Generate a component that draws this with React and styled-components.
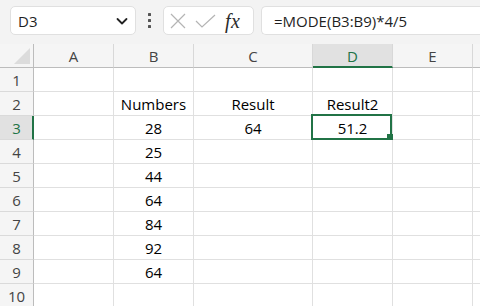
import React from "react";
import styled, { createGlobalStyle } from "styled-components";

const Global = createGlobalStyle`
  html, body { margin: 0; padding: 0; background: #ffffff; overflow: hidden; }
  body { font-family: "Open Sans", "Noto Sans", Arial, sans-serif; }
`;

const Page = styled.div`
  width: 480px;
  height: 306px;
  overflow: hidden;
  background: #ffffff;
  display: flex;
  flex-direction: column;
`;

const Toolbar = styled.div`
  height: 44px;
  flex: none;
  background: #f3f3f3;
  display: flex;
  align-items: flex-start;
  padding: 6px 0 0 10px;
  box-sizing: border-box;
`;

const NameBox = styled.div`
  width: 126px;
  height: 29px;
  box-sizing: border-box;
  background: #ffffff;
  border: 1px solid #e0e0e0;
  border-radius: 5px;
  display: flex;
  align-items: center;
  justify-content: space-between;
  padding: 0 6px 0 7px;
  font-size: 15px;
  color: #1f1f1f;
`;

const Dots = styled.div`
  width: 27px;
  height: 29px;
  display: flex;
  flex-direction: column;
  align-items: center;
  justify-content: center;
  gap: 3px;
  span {
    width: 3px;
    height: 3px;
    background: #555;
    border-radius: 0.5px;
  }
`;

const FxBox = styled.div`
  width: 91px;
  height: 29px;
  box-sizing: border-box;
  background: #ffffff;
  border: 1px solid #e0e0e0;
  border-radius: 5px;
  display: flex;
  align-items: center;
  padding: 0 0 0 6px;
  gap: 9px;
`;

const Fx = styled.span`
  font-family: "Liberation Serif", "DejaVu Serif", serif;
  font-style: italic;
  font-size: 20px;
  color: #2b2b2b;
  letter-spacing: 0.5px;
  line-height: 1;
`;

const FormulaBox = styled.div`
  flex: 1;
  margin-left: 7px;
  height: 29px;
  box-sizing: border-box;
  background: #ffffff;
  border: 1px solid #e0e0e0;
  border-right: none;
  border-radius: 5px 0 0 5px;
  display: flex;
  align-items: center;
  padding-left: 12px;
  font-size: 15px;
  color: #1f1f1f;
  white-space: nowrap;
`;

const Grid = styled.div`
  display: grid;
  grid-template-columns: 34px 80px 80px 119px 80px 80px 80px;
  grid-auto-rows: 24px;
  font-size: 15px;
`;

const ColHead = styled.div`
  background: ${(p) => (p.$sel ? "#e1e1e1" : "#f5f5f5")};
  color: ${(p) => (p.$sel ? "#217346" : "#444")};
  border-right: 1px solid #d8d8d8;
  border-bottom: ${(p) => (p.$sel ? "2px solid #217346" : "1px solid #bcbcbc")};
  box-sizing: border-box;
  display: flex;
  align-items: center;
  justify-content: center;
  padding-top: ${(p) => (p.$sel ? "1px" : "0")};
`;

const Corner = styled.div`
  background: #f5f5f5;
  border-right: 1px solid #bcbcbc;
  border-bottom: 1px solid #bcbcbc;
  box-sizing: border-box;
  display: flex;
  align-items: flex-end;
  justify-content: flex-end;
  padding: 0 3px 3px 0;
`;

const RowHead = styled.div`
  background: ${(p) => (p.$sel ? "#e1e1e1" : "#f5f5f5")};
  color: ${(p) => (p.$sel ? "#217346" : "#444")};
  border-right: ${(p) => (p.$sel ? "2px solid #217346" : "1px solid #bcbcbc")};
  border-bottom: 1px solid #dadada;
  box-sizing: border-box;
  display: flex;
  align-items: center;
  justify-content: center;
  padding-left: ${(p) => (p.$sel ? "1px" : "0")};
`;

const Cell = styled.div`
  position: relative;
  border-right: 1px solid #e0e0e0;
  border-bottom: 1px solid #e0e0e0;
  box-sizing: border-box;
  display: flex;
  align-items: center;
  justify-content: center;
  padding-top: 1px;
  color: #000;
  white-space: nowrap;
`;

const Selection = styled.div`
  position: absolute;
  top: -2px;
  left: -2px;
  right: 0;
  bottom: -1px;
  border: 2px solid #217346;
  pointer-events: none;
`;

const Handle = styled.div`
  position: absolute;
  right: -4px;
  bottom: -3px;
  width: 6px;
  height: 6px;
  background: #217346;
  border: 1px solid #ffffff;
  border-left: none;
  border-top: none;
  box-sizing: content-box;
`;

const cols = ["A", "B", "C", "D", "E", "F"];
const visibleLabel = { A: "A", B: "B", C: "C", D: "D", E: "E", F: "" };
const data = {
  2: { B: "Numbers", C: "Result", D: "Result2" },
  3: { B: "28", C: "64", D: "51.2" },
  4: { B: "25" },
  5: { B: "44" },
  6: { B: "64" },
  7: { B: "84" },
  8: { B: "92" },
  9: { B: "64" },
};

export default function App() {
  const rows = [1, 2, 3, 4, 5, 6, 7, 8, 9, 10];
  return (
    <Page>
      <Global />
      <Toolbar>
        <NameBox>
          <span>D3</span>
          <svg width="14" height="14" viewBox="0 0 14 14">
            <path d="M2.5 5 L7 9.5 L11.5 5" fill="none" stroke="#222" strokeWidth="1.8" strokeLinecap="round" strokeLinejoin="round" />
          </svg>
        </NameBox>
        <Dots>
          <span />
          <span />
          <span />
        </Dots>
        <FxBox>
          <svg width="16" height="16" viewBox="0 0 16 16">
            <path d="M1 1 L15 15 M15 1 L1 15" stroke="#b4b4b4" strokeWidth="1.2" fill="none" />
          </svg>
          <svg width="21" height="14" viewBox="0 0 21 14">
            <path d="M1 7 L7 13 L20 1" stroke="#b4b4b4" strokeWidth="1.2" fill="none" />
          </svg>
          <Fx>fx</Fx>
        </FxBox>
        <FormulaBox>=MODE(B3:B9)*4/5</FormulaBox>
      </Toolbar>
      <Grid>
        <Corner>
          <svg width="16" height="16" viewBox="0 0 16 16">
            <path d="M16 0 L16 16 L0 16 Z" fill="#dcdcdc" />
          </svg>
        </Corner>
        {cols.map((c) => (
          <ColHead key={c} $sel={c === "D"}>
            {visibleLabel[c]}
          </ColHead>
        ))}
        {rows.map((r) => (
          <React.Fragment key={r}>
            <RowHead $sel={r === 3}>{r}</RowHead>
            {cols.map((c) => (
              <Cell key={c}>
                {data[r] && data[r][c]}
                {r === 3 && c === "D" && (
                  <Selection>
                    <Handle />
                  </Selection>
                )}
              </Cell>
            ))}
          </React.Fragment>
        ))}
      </Grid>
    </Page>
  );
}
